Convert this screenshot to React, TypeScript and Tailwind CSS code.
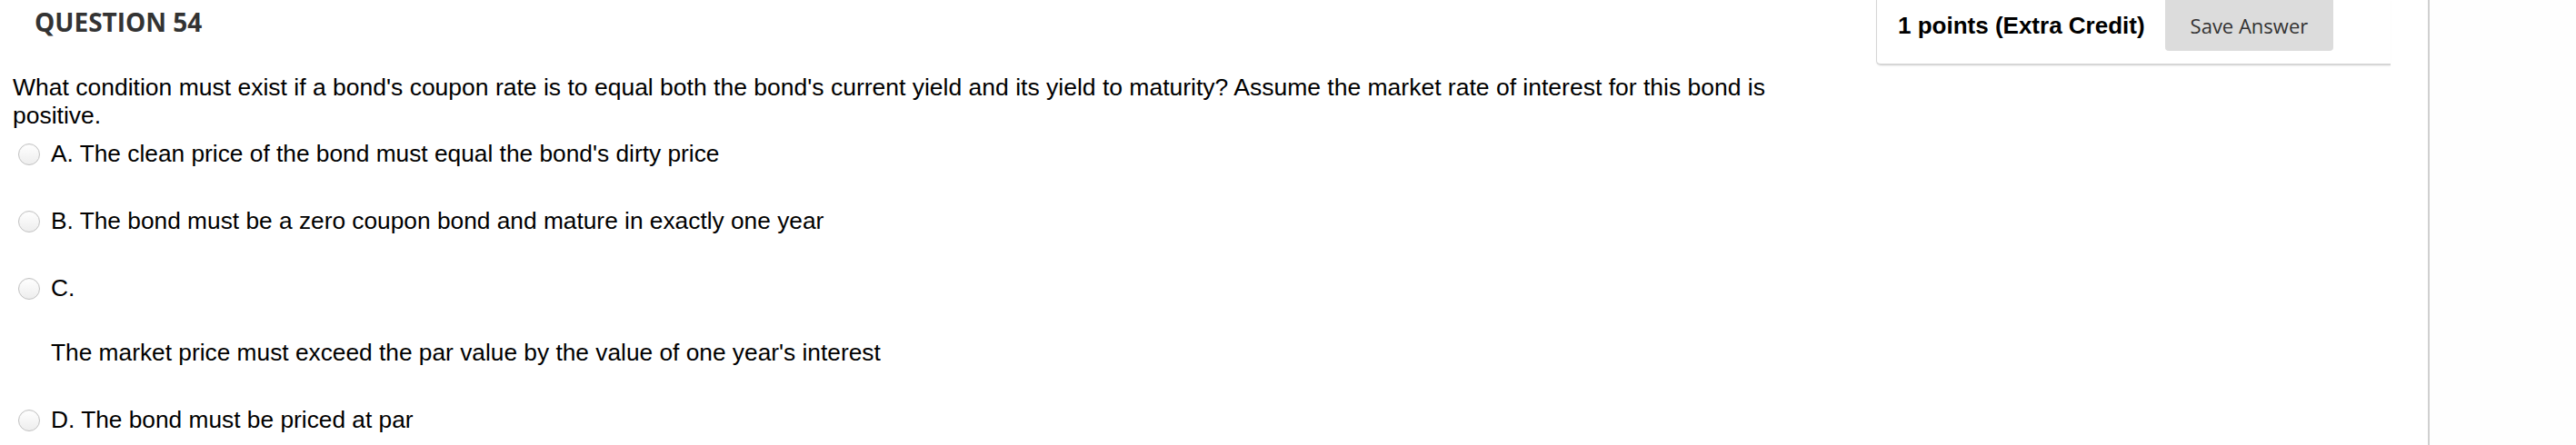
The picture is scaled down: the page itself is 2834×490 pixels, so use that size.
import React from "react";

const options = [
  { id: "a", label: "A. The clean price of the bond must equal the bond's dirty price" },
  { id: "b", label: "B. The bond must be a zero coupon bond and mature in exactly one year" },
  { id: "c", label: "C.", detail: "The market price must exceed the par value by the value of one year's interest" },
  { id: "d", label: "D. The bond must be priced at par" },
];

const Radio = () => (
  <span className="block h-[24px] w-[24px] shrink-0 rounded-full border border-[#c2c2c2] bg-linear-to-b from-white to-[#ededed] shadow-[inset_0_1px_1px_rgba(0,0,0,0.04)]" />
);

const App = () => {
  return (
    <div className="flex min-h-[490px] w-full bg-white">
      <div className="w-[2673px] shrink-0 border-r-2 border-[#d0d0d0]">
        <div className="flex items-start justify-between">
          <h2 className="mt-[10px] pl-[38px] text-[28px] leading-[28px] font-bold text-[#333] [font-family:'Open_Sans',sans-serif]">
            QUESTION 54
          </h2>
          <div className="mr-[41px] flex w-[566px] items-center gap-[22px] rounded-bl-[5px] border-b-2 border-l border-[#d6d6d6] pb-[14px] pl-[23px] shadow-[0_1px_2px_rgba(0,0,0,0.06)]">
            <span className="text-[26px] leading-[26px] font-bold text-black [font-family:'Liberation_Sans',Arial,sans-serif]">
              1 points (Extra Credit)
            </span>
            <button className="flex h-[56px] items-center rounded-b-[4px] bg-[#dcdcdc] px-[28px] text-[22px] leading-[22px] text-[#333] [font-family:'Open_Sans',sans-serif]">
              Save Answer
            </button>
          </div>
        </div>

        <div className="mt-[9px] pl-[14px] text-black [font-family:'Liberation_Sans',Arial,sans-serif]">
          <p className="max-w-[1990px] text-[26.5px] leading-[31px]">
            What condition must exist if a bond's coupon rate is to equal both the bond's current yield and its yield to
            maturity? Assume the market rate of interest for this bond is positive.
          </p>
        </div>

        <ul className="mt-[11px] pl-[20px] text-black [font-family:'Liberation_Sans',Arial,sans-serif]">
          {options.map((opt, i) => (
            <li key={opt.id} className={i === options.length - 1 ? "" : "mb-[43px]"}>
              <label className="flex h-[31px] items-center gap-[12px] text-[26.3px] leading-[31px]">
                <Radio />
                <span>{opt.label}</span>
              </label>
              {opt.detail && (
                <p className="mt-[40px] pl-[36px] text-[26.3px] leading-[31px]">{opt.detail}</p>
              )}
            </li>
          ))}
        </ul>
      </div>
      <div className="flex-1 bg-[#fefefe]" />
    </div>
  );
};

export default App;
